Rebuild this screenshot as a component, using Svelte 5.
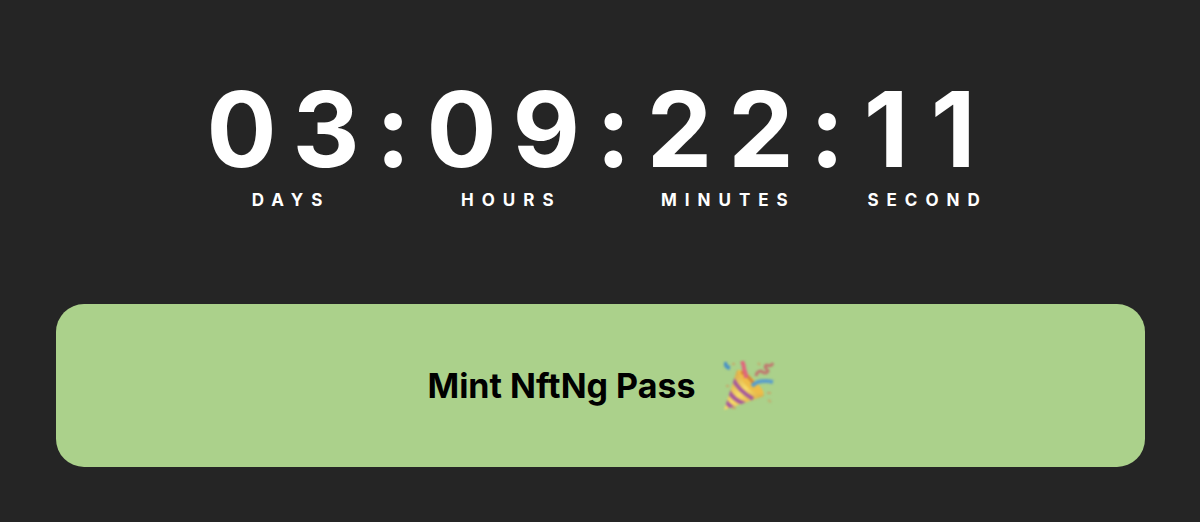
<script>
  const units = [
    { value: '03', label: 'Days' },
    { value: '09', label: 'Hours' },
    { value: '22', label: 'Minutes' },
    { value: '11', label: 'Second' }
  ];
</script>

<main class="mint">
  <div class="countdown" role="timer">
    {#each units as unit, i}
      {#if i > 0}
        <span class="separator">:</span>
      {/if}
      <div class="unit">
        <div class="value">
          {#each unit.value as digit}
            <span class="digit">{digit}</span>
          {/each}
        </div>
        <span class="label">{unit.label}</span>
      </div>
    {/each}
  </div>

  <button type="button" class="mint-button">
    <span>Mint NftNg Pass</span>
    <svg class="party" viewBox="0 0 50 50" aria-hidden="true">
      <defs>
        <linearGradient id="cone" x1="0" y1="0" x2="1" y2="1">
          <stop offset="0" stop-color="#c98f3c" />
          <stop offset="0.5" stop-color="#f7dc68" />
          <stop offset="1" stop-color="#d0902f" />
        </linearGradient>
        <clipPath id="cone-clip">
          <path d="M0 49L13 9Q21 12 29 20Q37 27 40 35Z" />
        </clipPath>
      </defs>
      <path d="M0 49L13 9Q21 12 29 20Q37 27 40 35Z" fill="url(#cone)" />
      <g clip-path="url(#cone-clip)" fill="none" stroke="#a55a9c" stroke-width="4">
        <path d="M0 38Q4 44 10 48" />
        <path d="M4 29Q9 39 21 43" />
        <path d="M9 18Q14 29 29 38" />
      </g>
      <path d="M14 9Q19 8 28 17Q38 26 40 32Q39 35 34 33Q26 30 20 22Q13 13 14 9Z" fill="#eebd48" />
      <path d="M17 11Q23 13 30 23" fill="none" stroke="#d2853a" stroke-width="3" />
      <path d="M18 0Q20 4 20 8Q22 12 22 17" fill="none" stroke="#e0667c" stroke-width="4" />
      <path d="M28 25Q35 18 49 21" fill="none" stroke="#5b9fca" stroke-width="4" />
      <path d="M32 15Q33 10 37 10Q42 14 44 10Q39 5 43 4Q47 6 49 2" fill="none" stroke="#bf786f" stroke-width="3" />
      <path d="M1 1Q1 6 6 7" fill="none" stroke="#4a93c5" stroke-width="4" />
      <path d="M8 3h3M2 25h3M43 32h4M44 39l3 2M34 2l2 2M8 47h4" stroke="#c7a76a" stroke-width="2" />
    </svg>
  </button>
</main>

<style>
  :global(body) {
    margin: 0;
    background: #252525;
  }
  .mint {
    padding: 81px 55px 55px 56px;
    color: #fff;
    font-family: Inter, sans-serif;
    font-weight: 700;
  }
  .countdown {
    display: flex;
    justify-content: center;
    margin-bottom: 92px;
  }
  .unit {
    display: flex;
    flex-direction: column;
    align-items: center;
  }
  .value,
  .separator {
    font-size: 104px;
    line-height: 96px;
    letter-spacing: 16px;
  }
  .value {
    display: flex;
  }
  .digit {
    min-width: 67px;
    text-align: center;
  }
  .label {
    margin-top: 11px;
    font-size: 17px;
    line-height: 24px;
    letter-spacing: 8px;
    text-transform: uppercase;
  }
  .mint-button {
    display: flex;
    align-items: center;
    justify-content: center;
    gap: 28px;
    width: 100%;
    padding: 56px 24px;
    border: 0;
    border-radius: 28px;
    background: #abd18b;
    color: #000;
    font: inherit;
    font-size: 34px;
    line-height: 51px;
    cursor: pointer;
  }
  .party {
    width: 50px;
    height: 50px;
    filter: blur(1px);
  }
</style>
